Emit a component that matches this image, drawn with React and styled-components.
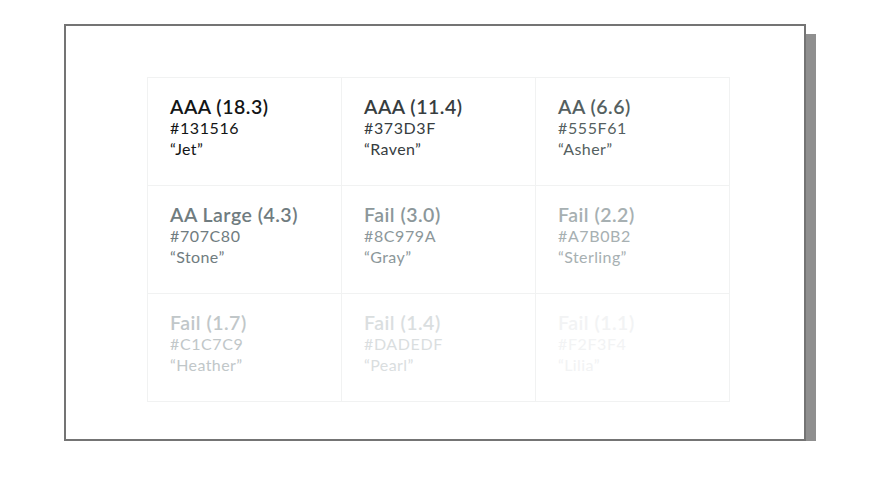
import React from 'react';
import styled, { createGlobalStyle } from 'styled-components';

const GlobalStyle = createGlobalStyle`
  body {
    margin: 0;
    background: #ffffff;
    font-family: Lato, 'Open Sans', sans-serif;
  }
`;

const swatches = [
  { rating: 'AAA (18.3)', hex: '#131516', name: 'Jet' },
  { rating: 'AAA (11.4)', hex: '#373D3F', name: 'Raven' },
  { rating: 'AA (6.6)', hex: '#555F61', name: 'Asher' },
  { rating: 'AA Large (4.3)', hex: '#707C80', name: 'Stone' },
  { rating: 'Fail (3.0)', hex: '#8C979A', name: 'Gray' },
  { rating: 'Fail (2.2)', hex: '#A7B0B2', name: 'Sterling' },
  { rating: 'Fail (1.7)', hex: '#C1C7C9', name: 'Heather' },
  { rating: 'Fail (1.4)', hex: '#DADEDF', name: 'Pearl' },
  { rating: 'Fail (1.1)', hex: '#F2F3F4', name: 'Lilia' },
];

const Page = styled.div`
  padding: 24px 0 0 64px;
`;

const Card = styled.section`
  box-sizing: border-box;
  width: 742px;
  height: 417px;
  border: 2px solid #747474;
  background: #ffffff;
  box-shadow: 10px 10px 0 #8f8f8f;
  padding: 51px 76px 0 81px;
`;

const Grid = styled.div`
  display: grid;
  grid-template-columns: repeat(3, 194px);
  grid-auto-rows: 108px;
  border-top: 1px solid #f1f2f2;
  border-left: 1px solid #f1f2f2;
  width: max-content;
`;

const Cell = styled.div`
  box-sizing: border-box;
  border-right: 1px solid #f1f2f2;
  border-bottom: 1px solid #f1f2f2;
  padding: 18px 0 0 22px;
  color: ${(p) => p.$color};
`;

const Rating = styled.div`
  font-size: 19.5px;
  font-weight: 600;
  letter-spacing: 0.5px;
  line-height: 22px;
`;

const Hex = styled.div`
  font-size: 16px;
  letter-spacing: 0.6px;
  line-height: 20px;
`;

const Name = styled.div`
  font-size: 16px;
  letter-spacing: 0.4px;
  line-height: 21px;
`;

const App = () => (
  <>
    <GlobalStyle />
    <Page>
      <Card>
        <Grid>
          {swatches.map((s) => (
            <Cell key={s.hex} $color={s.hex}>
              <Rating>{s.rating}</Rating>
              <Hex>{s.hex}</Hex>
              <Name>“{s.name}”</Name>
            </Cell>
          ))}
        </Grid>
      </Card>
    </Page>
  </>
);

export default App;
